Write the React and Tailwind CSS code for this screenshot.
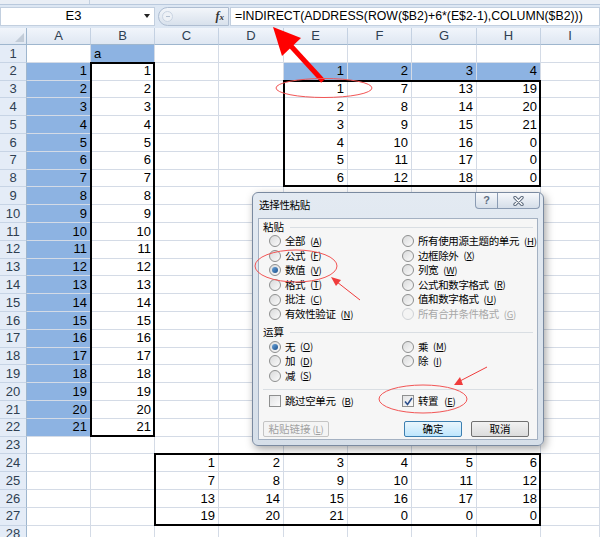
import clsx from 'clsx';

const COLS = ['A', 'B', 'C', 'D', 'E', 'F', 'G', 'H', 'I'];
const ROWS = Array.from({ length: 28 }, (_, i) => i + 1);

// value, fill and thick-border edges [top, left, right, bottom] for a cell
function getCell(r, c) {
    if (r === 1 && c === 1) return { v: 'a', left: true, fill: true };
    if (r >= 2 && r <= 22 && c === 0) return { v: r - 1, fill: true };
    if (r >= 2 && r <= 22 && c === 1) return { v: r - 1, box: [r === 2, true, true, r === 22] };
    if (r === 2 && c >= 4 && c <= 7) return { v: c - 3, fill: true };
    if (r >= 3 && r <= 8 && c >= 4 && c <= 7) {
        const n = r - 2 + 6 * (c - 4);
        return { v: n <= 21 ? n : 0, box: [r === 3, c === 4, c === 7, r === 8] };
    }
    if (r >= 24 && r <= 27 && c >= 2 && c <= 7) {
        const n = 6 * (r - 24) + (c - 2) + 1;
        return { v: n <= 21 ? n : 0, box: [r === 24, c === 2, c === 7, r === 27] };
    }
    return null;
}

function Cell({ r, c }) {
    const d = getCell(r, c);
    const box = d?.box;
    return (
        <div
            className={clsx(
                'h-[17.8px] border-r border-b border-[#d4dbe6] flex items-center px-[3px] text-[13px] text-black',
                d?.fill && 'bg-[#8db3e2] border-[#8db3e2]',
                d?.left ? 'justify-start' : 'justify-end',
                box && 'relative'
            )}
        >
            {d?.v}
            {box && box[0] && <span className="absolute left-[-1px] right-[-1px] top-[-1px] h-[2px] bg-black" />}
            {box && box[1] && <span className="absolute top-[-1px] bottom-[-1px] left-[-1px] w-[2px] bg-black" />}
            {box && box[2] && <span className="absolute top-[-1px] bottom-[-1px] right-[-1px] w-[2px] bg-black" />}
            {box && box[3] && <span className="absolute left-[-1px] right-[-1px] bottom-[-1px] h-[2px] bg-black" />}
        </div>
    );
}

function FormulaBar() {
    return (
        <div className="h-[28px] bg-[#dde7f3] flex flex-col">
            <div className="h-[5px] bg-[#e9eef5] border-b border-[#b9c9dd] flex">
                <div className="w-[90px] border-r border-[#c3d0e0]" />
            </div>
            <div className="flex items-center h-[20px] mt-[1px]">
                <div className="w-[155px] h-[19px] bg-white border border-[#c2cfdf] flex items-center">
                    <span className="flex-1 text-center text-[13px] text-black pl-[2px]">E3</span>
                    <span className="w-0 h-0 border-l-[3.5px] border-r-[3.5px] border-t-[4px] border-l-transparent border-r-transparent border-t-[#222] mr-[4px]" />
                </div>
                <div className="ml-[3px] w-[71px] h-[19px] rounded-l-full border border-[#aebdd1] bg-gradient-to-b from-[#f3f6fa] to-[#d8e1ec] flex items-center justify-between pr-[4px]">
                    <span className="ml-[3px] w-[11px] h-[11px] rounded-full border border-[#c9d4e2] bg-[#edf1f6] flex items-center justify-center">
                        <span className="w-[4px] h-[1px] bg-[#b3c0d0]" />
                    </span>
                    <span className="font-['Liberation_Serif',serif] italic font-bold text-[12px] text-[#333]">
                        f<span className="text-[9px]">x</span>
                    </span>
                </div>
                <div className="ml-[1px] flex-1 h-[19px] bg-white border border-[#c2cfdf] flex items-center pl-[4px] text-[12.3px] text-black whitespace-nowrap">
                    =INDIRECT(ADDRESS(ROW($B2)+6*(E$2-1),COLUMN($B2)))
                </div>
            </div>
        </div>
    );
}

function Sheet() {
    return (
        <div className="grid grid-cols-[27px_64px_64px_64px_65px_64px_64px_65px_64px_59px]">
            <div className="h-[17px] bg-gradient-to-b from-[#f1f5fb] to-[#dfe7f2] border-r border-b border-[#9eb6ce] flex items-end justify-end p-[2px]">
                <span className="w-0 h-0 border-l-[9px] border-l-transparent border-b-[9px] border-b-[#c2ccd8]" />
            </div>
            {COLS.map((col) => (
                <div
                    key={col}
                    className="h-[17px] bg-gradient-to-b from-[#f1f5fb] to-[#dfe7f2] border-r border-r-[#c4d1e2] border-b border-b-[#9eb6ce] flex items-center justify-center text-[13px] text-[#2f3f52]"
                >
                    {col}
                </div>
            ))}
            {ROWS.map((r) => (
                <Row key={r} r={r} />
            ))}
        </div>
    );
}

function Row({ r }) {
    return (
        <>
            <div className="h-[17.8px] bg-[#e4ecf7] border-r border-r-[#9eb6ce] border-b border-b-[#c7d4e5] flex items-center justify-center text-[13px] text-[#2f3f52]">
                {r}
            </div>
            {COLS.map((_, c) => (
                <Cell key={c} r={r} c={c} />
            ))}
        </>
    );
}

function Radio({ checked, disabled }) {
    return (
        <span
            className={clsx(
                'w-[12px] h-[12px] rounded-full border flex items-center justify-center shrink-0',
                disabled
                    ? 'border-[#cfd2d6] bg-[#f4f4f4]'
                    : 'border-[#8e8f8f] bg-gradient-to-br from-[#d9dadb] to-[#fbfbfb]'
            )}
        >
            {checked && <span className="w-[6px] h-[6px] rounded-full bg-gradient-to-br from-[#6aa5dc] to-[#1b4f8a]" />}
        </span>
    );
}

function Key({ k }) {
    return (
        <span className="text-[9.5px] ml-[2px] tracking-tight">
            (<span className="underline">{k}</span>)
        </span>
    );
}

function Option({ text, k, checked, disabled }) {
    return (
        <div className={clsx('flex items-center h-[14.6px] gap-[3px] whitespace-nowrap', disabled ? 'text-[#a8a8a8]' : 'text-black')}>
            <Radio checked={checked} disabled={disabled} />
            <span className="ml-[1px] tracking-[-0.4px]">{text}</span>
            <Key k={k} />
        </div>
    );
}

function Check({ text, k, checked }) {
    return (
        <div className="flex items-center h-[14px] gap-[4px] text-black whitespace-nowrap">
            <span className="w-[12px] h-[12px] border border-[#8e8f8f] bg-gradient-to-br from-[#e2e3e4] to-[#fbfbfb] flex items-center justify-center shrink-0">
                {checked && (
                    <svg width="9" height="9" viewBox="0 0 9 9">
                        <path d="M1 4.5 L3.5 7.5 L8 1" fill="none" stroke="#2c4f8c" strokeWidth="1.6" />
                    </svg>
                )}
            </span>
            <span className="tracking-[-0.4px]">{text}</span>
            <Key k={k} />
        </div>
    );
}

function GroupLabel({ text }) {
    return (
        <div className="flex items-center h-[14px] pl-[4px] pr-[4px] gap-[6px]">
            <span>{text}</span>
            <span className="flex-1 h-px bg-[#d9dee3]" />
        </div>
    );
}

function Button({ children, primary, disabled }) {
    return (
        <div
            className={clsx(
                'h-[16px] rounded-[2px] border flex items-center justify-center whitespace-nowrap',
                primary
                    ? 'w-[58px] border-[#3c7fb1] bg-gradient-to-b from-[#eaf6fd] to-[#bee6fd]'
                    : disabled
                    ? 'w-[66px] border-[#c4c4c4] bg-[#f4f4f4] text-[#a0a0a0]'
                    : 'w-[58px] border-[#707070] bg-gradient-to-b from-[#f2f2f2] to-[#dcdcdc]'
            )}
        >
            {children}
        </div>
    );
}

function PasteDialog() {
    return (
        <div className="absolute left-[252px] top-[192px] w-[292px] h-[254px] rounded-[6px] border border-[#7a8aa0] bg-gradient-to-b from-[#e3eaf2] to-[#d6dfe9] shadow-[2px_3px_8px_rgba(0,0,0,0.35)] flex flex-col px-[5px] pb-[5px] font-['Noto_Sans_CJK_SC','Liberation_Sans',sans-serif] text-[10.5px] leading-none">
            <div className="h-[25px] flex items-start justify-between">
                <span className="mt-[7px] ml-[1px] text-black tracking-[-0.3px]">选择性粘贴</span>
                <div className="flex mr-[-2px]">
                    <div className="w-[23px] h-[16px] border border-[#8a9bb3] border-t-0 rounded-bl-[4px] bg-gradient-to-b from-[#f6f8fb] to-[#d5dee9] flex items-center justify-center text-[11px] font-bold text-[#5f6e82] font-['Liberation_Sans',sans-serif]">
                        ?
                    </div>
                    <div className="w-[42px] h-[16px] border border-[#8a9bb3] border-t-0 border-l-0 rounded-br-[4px] bg-gradient-to-b from-[#f6f8fb] to-[#d5dee9] flex items-center justify-center">
                        <svg width="11" height="10" viewBox="0 0 11 10">
                            <path d="M2 1.5 L9 8.5 M9 1.5 L2 8.5" stroke="#5d6b7d" strokeWidth="3.4" strokeLinecap="round" />
                            <path d="M2 1.5 L9 8.5 M9 1.5 L2 8.5" stroke="#ffffff" strokeWidth="1.4" strokeLinecap="round" />
                        </svg>
                    </div>
                </div>
            </div>
            <div className="flex-1 border border-[#a4b1c2] bg-[#f6f6f6] flex flex-col pt-[1px]">
                <GroupLabel text="粘贴" />
                <div className="grid grid-cols-[133px_1fr] pl-[10px]">
                    <div className="flex flex-col">
                        <Option text="全部" k="A" />
                        <Option text="公式" k="F" />
                        <Option text="数值" k="V" checked />
                        <Option text="格式" k="T" />
                        <Option text="批注" k="C" />
                        <Option text="有效性验证" k="N" />
                    </div>
                    <div className="flex flex-col">
                        <Option text="所有使用源主题的单元" k="H" />
                        <Option text="边框除外" k="X" />
                        <Option text="列宽" k="W" />
                        <Option text="公式和数字格式" k="R" />
                        <Option text="值和数字格式" k="U" />
                        <Option text="所有合并条件格式" k="G" disabled />
                    </div>
                </div>
                <div className="mt-[4px]">
                    <GroupLabel text="运算" />
                </div>
                <div className="grid grid-cols-[133px_1fr] pl-[10px]">
                    <div className="flex flex-col">
                        <Option text="无" k="O" checked />
                        <Option text="加" k="D" />
                        <Option text="减" k="S" />
                    </div>
                    <div className="flex flex-col">
                        <Option text="乘" k="M" />
                        <Option text="除" k="I" />
                    </div>
                </div>
                <div className="mx-[4px] mt-[6px] h-px bg-[#d9dee3]" />
                <div className="grid grid-cols-[133px_1fr] pl-[10px] mt-[4px]">
                    <Check text="跳过空单元" k="B" />
                    <Check text="转置" k="E" checked />
                </div>
                <div className="flex items-center mt-[13px] pl-[4px] pr-[8px]">
                    <Button disabled>
                        粘贴链接<Key k="L" />
                    </Button>
                    <div className="flex-1" />
                    <Button primary>确定</Button>
                    <div className="w-[9px]" />
                    <Button>取消</Button>
                </div>
            </div>
        </div>
    );
}

function Annotations() {
    return (
        <svg className="absolute inset-0 pointer-events-none" width="600" height="537" viewBox="0 0 600 537">
            <line x1="323" y1="81" x2="290" y2="45" stroke="#ff0000" strokeWidth="5" />
            <polygon points="273,27 301,38 282,56" fill="#ff0000" />
            <ellipse cx="324" cy="88" rx="48" ry="9.5" fill="none" stroke="#f25555" strokeWidth="1" />
            <ellipse cx="296" cy="266" rx="41" ry="16" fill="none" stroke="#f25555" strokeWidth="1" />
            <line x1="360" y1="300" x2="337" y2="282" stroke="#f03c3c" strokeWidth="1" />
            <polygon points="331,277 341,280 336,286" fill="#f03c3c" />
            <ellipse cx="423" cy="399" rx="44" ry="14" fill="none" stroke="#f25555" strokeWidth="1" />
            <line x1="487" y1="367" x2="460" y2="381" stroke="#f03c3c" strokeWidth="1" />
            <polygon points="454,385 460,377 463,385" fill="#f03c3c" />
        </svg>
    );
}

export default function App() {
    return (
        <div className="relative w-[600px] h-[537px] overflow-hidden bg-white font-['Liberation_Sans',sans-serif]">
            <FormulaBar />
            <Sheet />
            <PasteDialog />
            <Annotations />
        </div>
    );
}
